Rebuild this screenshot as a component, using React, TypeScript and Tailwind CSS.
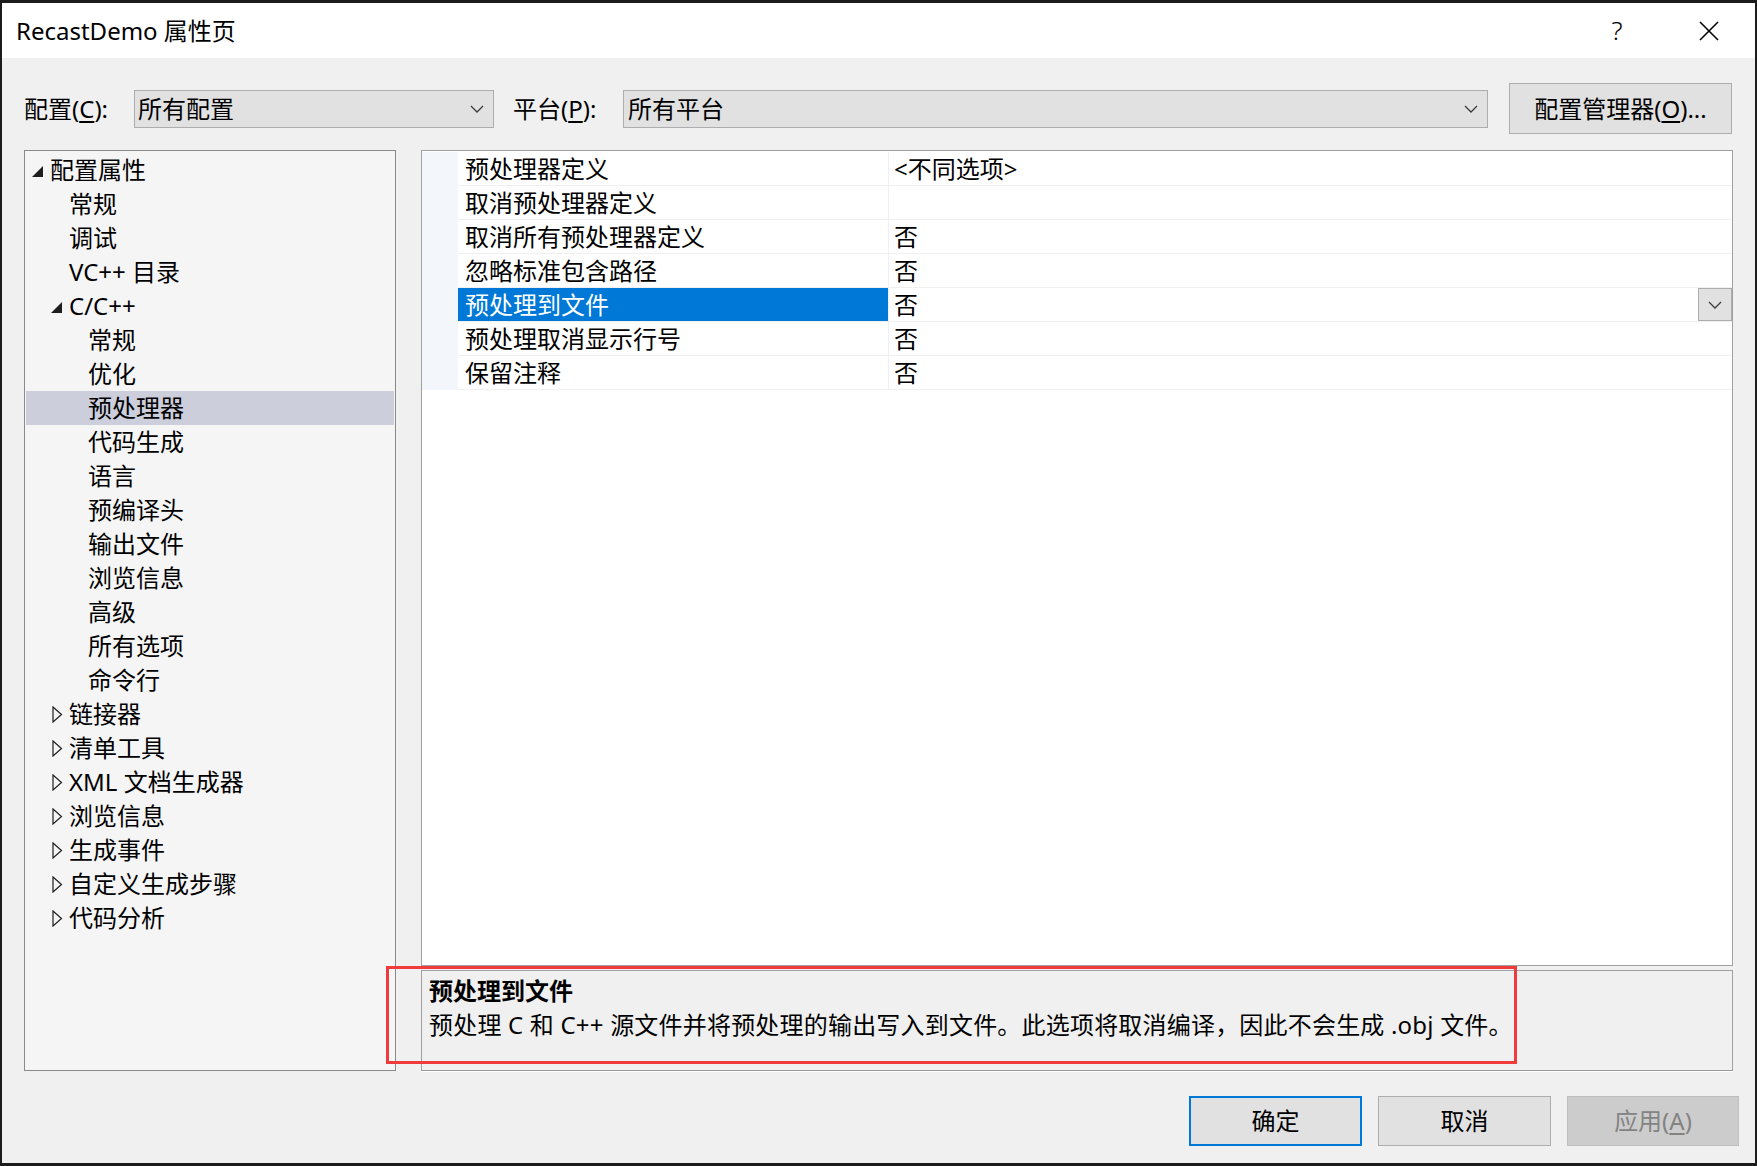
import React from 'react'

type TreeItem = {
  label: string
  level: 0 | 1 | 2
  expand?: 'open' | 'closed'
  selected?: boolean
}

const treeItems: TreeItem[] = [
  { label: '配置属性', level: 0, expand: 'open' },
  { label: '常规', level: 1 },
  { label: '调试', level: 1 },
  { label: 'VC++ 目录', level: 1 },
  { label: 'C/C++', level: 1, expand: 'open' },
  { label: '常规', level: 2 },
  { label: '优化', level: 2 },
  { label: '预处理器', level: 2, selected: true },
  { label: '代码生成', level: 2 },
  { label: '语言', level: 2 },
  { label: '预编译头', level: 2 },
  { label: '输出文件', level: 2 },
  { label: '浏览信息', level: 2 },
  { label: '高级', level: 2 },
  { label: '所有选项', level: 2 },
  { label: '命令行', level: 2 },
  { label: '链接器', level: 1, expand: 'closed' },
  { label: '清单工具', level: 1, expand: 'closed' },
  { label: 'XML 文档生成器', level: 1, expand: 'closed' },
  { label: '浏览信息', level: 1, expand: 'closed' },
  { label: '生成事件', level: 1, expand: 'closed' },
  { label: '自定义生成步骤', level: 1, expand: 'closed' },
  { label: '代码分析', level: 1, expand: 'closed' },
]

const properties: { name: string; value: string; selected?: boolean }[] = [
  { name: '预处理器定义', value: '<不同选项>' },
  { name: '取消预处理器定义', value: '' },
  { name: '取消所有预处理器定义', value: '否' },
  { name: '忽略标准包含路径', value: '否' },
  { name: '预处理到文件', value: '否', selected: true },
  { name: '预处理取消显示行号', value: '否' },
  { name: '保留注释', value: '否' },
]

const indent = ['pl-[5px]', 'pl-[24px]', 'pl-[43px]']

const Chevron = () => (
  <svg width="14" height="8" viewBox="0 0 14 8" fill="none" stroke="#3c3c3c" strokeWidth="1.3">
    <polyline points="1,1 7,7 13,1" />
  </svg>
)

const ExpandedGlyph = () => (
  <svg width="11" height="11" viewBox="0 0 11 11" className="mt-[2px] ml-[1px]">
    <polygon points="11,0 11,11 0,11" fill="#1e1e1e" />
  </svg>
)

const CollapsedGlyph = () => (
  <svg width="11" height="17" viewBox="0 0 11 17" className="ml-[2px]">
    <polygon points="1,1 9.5,8.5 1,16" fill="none" stroke="#1e1e1e" strokeWidth="1.2" />
  </svg>
)

const App: React.FC = () => {
  return (
    <div className="relative w-[1757px] h-[1166px] bg-[#1c1c1c] pt-[3px] pl-[2px] pr-[2px] pb-[3px] font-['Noto_Sans','Noto_Sans_CJK_SC',sans-serif] text-[24px] text-black">
      <div className="flex flex-col h-full bg-[#f0f0f0]">
        {/* Title bar */}
        <div className="flex h-[55px] items-center bg-white">
          <span className="pl-[14px] leading-[55px]">RecastDemo 属性页</span>
          <div className="ml-auto flex h-full">
            <div className="flex w-[92px] items-center justify-center text-[26px] font-light">?</div>
            <div className="flex w-[92px] items-center justify-center">
              <svg width="20" height="20" viewBox="0 0 20 20" stroke="#000" strokeWidth="1.6">
                <line x1="1" y1="1" x2="19" y2="19" />
                <line x1="19" y1="1" x2="1" y2="19" />
              </svg>
            </div>
          </div>
        </div>

        {/* Configuration toolbar */}
        <div className="mt-[25px] flex h-[51px] items-center pl-[22px]">
          <span className="w-[110px]">
            配置(<span className="underline underline-offset-[3px]">C</span>):
          </span>
          <div className="flex h-[38px] w-[360px] items-center border border-[#adadad] bg-[#e1e1e1] pl-[3px] pr-[9px]">
            <span>所有配置</span>
            <span className="ml-auto flex"><Chevron /></span>
          </div>
          <span className="ml-[19px] w-[110px]">
            平台(<span className="underline underline-offset-[3px]">P</span>):
          </span>
          <div className="flex h-[38px] w-[865px] items-center border border-[#adadad] bg-[#e1e1e1] pl-[4px] pr-[9px]">
            <span>所有平台</span>
            <span className="ml-auto flex"><Chevron /></span>
          </div>
          <div className="ml-[21px] flex h-[51px] w-[223px] items-center justify-center border border-[#adadad] bg-[#e1e1e1]">
            配置管理器(<span className="underline underline-offset-[3px]">O</span>)...
          </div>
        </div>

        {/* Main area */}
        <div className="mt-[16px] flex pl-[22px]">
          {/* Tree */}
          <div className="h-[921px] w-[372px] border border-[#8a8a8a] bg-[#f5f5f5] pt-[2px]">
            {treeItems.map((item, i) => (
              <div
                key={i}
                className={`mx-[1px] flex h-[34px] items-center ${indent[item.level]} ${item.selected ? 'bg-[#cccedb]' : ''}`}
              >
                <span className="flex w-[19px] items-center">
                  {item.expand === 'open' && <ExpandedGlyph />}
                  {item.expand === 'closed' && <CollapsedGlyph />}
                </span>
                <span className="leading-[34px] whitespace-nowrap">{item.label}</span>
              </div>
            ))}
          </div>

          {/* Right side */}
          <div className="ml-[25px] flex w-[1312px] flex-col">
            <div className="h-[816px] border border-[#a0a0a0] bg-white pt-[1px]">
              {properties.map((p, i) => (
                <div key={i} className="flex h-[34px]">
                  <div className="w-[36px] bg-[#f3f6fb]" />
                  <div className="flex flex-1 border-b border-[#f0f0f0]">
                    <div
                      className={`flex w-[431px] items-center border-r border-[#f0f0f0] pl-[7px] ${p.selected ? 'bg-[#0078d7] text-white' : ''}`}
                    >
                      <span className="leading-[33px]">{p.name}</span>
                    </div>
                    <div className="flex flex-1 items-center pl-[5px]">
                      <span className="leading-[33px]">{p.value}</span>
                      {p.selected && (
                        <div className="ml-auto flex h-[33px] w-[34px] items-center justify-center border border-[#adadad] bg-[#e1e1e1]">
                          <Chevron />
                        </div>
                      )}
                    </div>
                  </div>
                </div>
              ))}
            </div>

            {/* Description */}
            <div className="mt-[4px] h-[101px] border border-[#a0a0a0] border-b-[#9a9a9a] bg-[#f0f0f0] pl-[7px] pt-[3px] shadow-[0_1px_0_#ffffff]">
              <div className="font-bold leading-[34px]">预处理到文件</div>
              <div className="leading-[34px] whitespace-nowrap tracking-[0.2px]">
                预处理 C 和 C++ 源文件并将预处理的输出写入到文件。此选项将取消编译，因此不会生成 .obj 文件。
              </div>
            </div>
          </div>
        </div>

        {/* Buttons */}
        <div className="mt-[25px] flex justify-end gap-[16px] pr-[16px]">
          <div className="flex h-[50px] w-[173px] items-center justify-center border-2 border-[#0078d7] bg-[#e1e1e1]">
            确定
          </div>
          <div className="flex h-[50px] w-[173px] items-center justify-center border border-[#adadad] bg-[#e1e1e1]">
            取消
          </div>
          <div className="flex h-[50px] w-[172px] items-center justify-center border border-[#bfbfbf] bg-[#cccccc] text-[#838383]">
            应用(<span className="underline underline-offset-[3px]">A</span>)
          </div>
        </div>
      </div>

      {/* Red annotation box */}
      <div className="absolute left-[386px] top-[966px] h-[98px] w-[1131px] border-[3px] border-[#ef3b3b]" />
    </div>
  )
}

export default App
